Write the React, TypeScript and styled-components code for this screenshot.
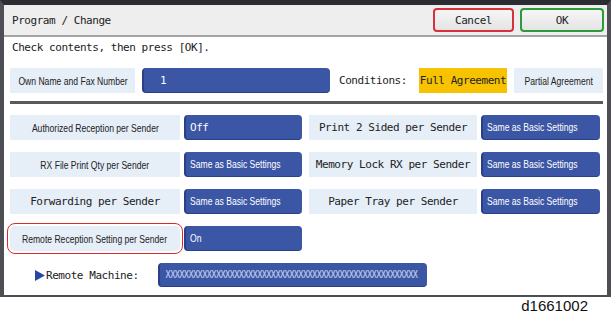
import styled, {createGlobalStyle} from 'styled-components';

const MONO = `"DejaVu Sans Mono", "Liberation Mono", monospace`;
const SANS = `"Liberation Sans", Arial, sans-serif`;

const GlobalStyle = createGlobalStyle`
  html, body {
    margin: 0;
    padding: 0;
    background: #fff;
  }
  body {
    width: 612px;
    height: 318px;
    overflow: hidden;
    font-family: ${MONO};
  }
`;

type Row = {left: string; leftMono?: boolean; leftValue: string; right: string; rightValue: string};

const rows: Row[] = [
  {left: 'Authorized Reception per Sender', leftValue: 'Off', right: 'Print 2 Sided per Sender', rightValue: 'Same as Basic Settings'},
  {left: 'RX File Print Qty per Sender', leftValue: 'Same as Basic Settings', right: 'Memory Lock RX per Sender', rightValue: 'Same as Basic Settings'},
  {left: 'Forwarding per Sender', leftMono: true, leftValue: 'Same as Basic Settings', right: 'Paper Tray per Sender', rightValue: 'Same as Basic Settings'},
];

export default function App() {
  return (
    <>
      <GlobalStyle />
      <Screen>
        <Header>
          <Title>Program / Change</Title>
          <ActionButton $tone="#d8303c">Cancel</ActionButton>
          <ActionButton $tone="#2a9a3a" $wide>OK</ActionButton>
        </Header>

        <Body>
          <Message>Check contents, then press [OK].</Message>

          <TopRow>
            <Label $width={125}>
              <Narrow>Own Name and Fax Number</Narrow>
            </Label>
            <Field $width={188}>
              <MonoText $indent={12}>1</MonoText>
            </Field>
            <Conditions>Conditions:</Conditions>
            <Choice $selected>Full Agreement</Choice>
            <Choice>
              <Narrow>Partial Agreement</Narrow>
            </Choice>
          </TopRow>

          <Separator />

          <SettingsGrid>
            {rows.map((row) => (
              <Setting key={row.left}>
                <Label $mono={row.leftMono}>
                  {row.leftMono ? row.left : <Narrow>{row.left}</Narrow>}
                </Label>
                <Field>
                  {row.leftValue === 'Off' ? (
                    <MonoText>Off</MonoText>
                  ) : (
                    <Narrow $origin="left">{row.leftValue}</Narrow>
                  )}
                </Field>
                <Label $mono>{row.right}</Label>
                <Field>
                  <Narrow $origin="left">{row.rightValue}</Narrow>
                </Field>
              </Setting>
            ))}
            <Setting>
              <Label $highlight $align="left">
                <Narrow $origin="left">Remote Reception Setting per Sender</Narrow>
              </Label>
              <Field>
                <Narrow $origin="left">On</Narrow>
              </Field>
            </Setting>
          </SettingsGrid>

          <RemoteRow>
            <RemoteLabel>
              <svg width="10" height="11" viewBox="0 0 10 11">
                <path d="M0 0 L10 5.5 L0 11 Z" fill="#2747a6" />
              </svg>
              Remote Machine:
            </RemoteLabel>
            <Field $width={269}>
              <Masked>{'X'.repeat(55)}</Masked>
            </Field>
          </RemoteRow>
        </Body>
      </Screen>
      <Caption>d1661002</Caption>
    </>
  );
}

const Screen = styled.div`
  box-sizing: border-box;
  width: 611px;
  height: 297px;
  border-style: solid;
  border-color: #4d4f55;
  border-width: 5px 4px 2px 4px;
  border-top-color: #2b2d33;
  background: #fff;
  display: flex;
  flex-direction: column;
`;

const Header = styled.div`
  height: 30px;
  flex-shrink: 0;
  display: flex;
  align-items: center;
  gap: 6px;
  padding: 0 3px 0 8px;
  background: #eeeeee;
  border-bottom: 2px solid #a4a4a4;
`;

const Title = styled.div`
  flex: 1;
  font-family: ${MONO};
  font-size: 11px;
  letter-spacing: -0.45px;
  color: #222;
`;

const ActionButton = styled.div<{$tone: string; $wide?: boolean}>`
  box-sizing: border-box;
  width: ${(p) => (p.$wide ? 84 : 81)}px;
  height: 24px;
  border: 2px solid ${(p) => p.$tone};
  border-radius: 4px;
  background: linear-gradient(#f6f6f6, #e4e4e4);
  display: flex;
  align-items: center;
  justify-content: center;
  font-family: ${MONO};
  font-size: 11px;
  letter-spacing: -0.45px;
  color: #222;
`;

const Body = styled.div`
  flex: 1;
  padding: 0 4px 0 6px;
`;

const Message = styled.div`
  margin: 3px 0 0 2px;
  height: 16px;
  line-height: 16px;
  font-family: ${MONO};
  font-size: 11px;
  letter-spacing: -0.45px;
  color: #222;
`;

const Narrow = styled.span<{$origin?: string}>`
  display: inline-block;
  white-space: nowrap;
  font-family: ${SANS};
  font-size: 11px;
  letter-spacing: 0;
  transform: scaleX(0.78);
  transform-origin: ${(p) => p.$origin ?? 'center'};
`;

const TopRow = styled.div`
  margin-top: 12px;
  height: 25px;
  display: flex;
  align-items: stretch;
  gap: 7px;
`;

const Label = styled.div<{$width?: number; $mono?: boolean; $highlight?: boolean; $align?: string}>`
  box-sizing: border-box;
  ${(p) => (p.$width ? `width: ${p.$width}px; flex-shrink: 0;` : '')}
  background: #e6eef8;
  display: flex;
  align-items: center;
  justify-content: ${(p) => (p.$align === 'left' ? 'flex-start' : 'center')};
  padding: 0 ${(p) => (p.$align === 'left' ? '12px' : '0')};
  white-space: nowrap;
  color: #222;
  font-family: ${MONO};
  font-size: 11px;
  letter-spacing: ${(p) => (p.$mono ? '-0.45px' : '0')};
  ${(p) =>
    p.$highlight &&
    `
    outline: 1.5px solid #e02828;
    outline-offset: 2px;
    border-radius: 5px;
  `}
`;

const Field = styled.div<{$width?: number}>`
  box-sizing: border-box;
  ${(p) => (p.$width ? `width: ${p.$width}px; flex-shrink: 0;` : '')}
  background: #3b56a4;
  border-left: 2px solid #2a3f86;
  border-bottom: 1px solid #2a3f86;
  border-radius: 4px;
  display: flex;
  align-items: center;
  padding: 0 4px;
  overflow: hidden;
  white-space: nowrap;
  color: #fff;
`;

const MonoText = styled.span<{$indent?: number}>`
  padding-left: ${(p) => p.$indent ?? 0}px;
  font-family: ${MONO};
  font-size: 11px;
  letter-spacing: -0.45px;
`;

const Conditions = styled.div`
  width: 73px;
  margin-left: 2px;
  display: flex;
  align-items: center;
  white-space: nowrap;
  font-family: ${MONO};
  font-size: 11px;
  letter-spacing: -0.45px;
  color: #222;
`;

const Choice = styled.div<{$selected?: boolean}>`
  box-sizing: border-box;
  width: ${(p) => (p.$selected ? 88 : 89)}px;
  background: ${(p) => (p.$selected ? '#f7c300' : '#e6eef8')};
  display: flex;
  align-items: center;
  justify-content: center;
  white-space: nowrap;
  color: #222;
  font-family: ${MONO};
  font-size: 11px;
  letter-spacing: -0.45px;
`;

const Separator = styled.div`
  margin-top: 8px;
  height: 3px;
  background: #5a5a5a;
`;

const SettingsGrid = styled.div`
  margin-top: 11px;
  display: flex;
  flex-direction: column;
  gap: 12px;
`;

const Setting = styled.div`
  height: 25px;
  display: grid;
  grid-template-columns: 170px 118px 171px 119px;
  column-gap: 4px;

  & > :nth-child(3) {
    margin-left: 3px;
  }
`;

const RemoteRow = styled.div`
  margin-top: 12px;
  height: 24px;
  display: flex;
  align-items: stretch;
`;

const RemoteLabel = styled.div`
  width: 148px;
  padding-left: 25px;
  box-sizing: border-box;
  display: flex;
  align-items: center;
  font-family: ${MONO};
  font-size: 11px;
  letter-spacing: -0.45px;
  color: #222;

  svg {
    margin-right: 1px;
  }
`;

const Masked = styled.span`
  display: inline-block;
  font-family: ${SANS};
  color: #aebce6;
  font-weight: bold;
  font-size: 10px;
  letter-spacing: -0.8px;
  padding-left: 2px;
  transform: scaleX(0.78);
  transform-origin: left;
`;

const Caption = styled.div`
  margin-right: 24px;
  line-height: 17px;
  text-align: right;
  font-family: ${SANS};
  font-size: 15px;
  color: #111;
`;
